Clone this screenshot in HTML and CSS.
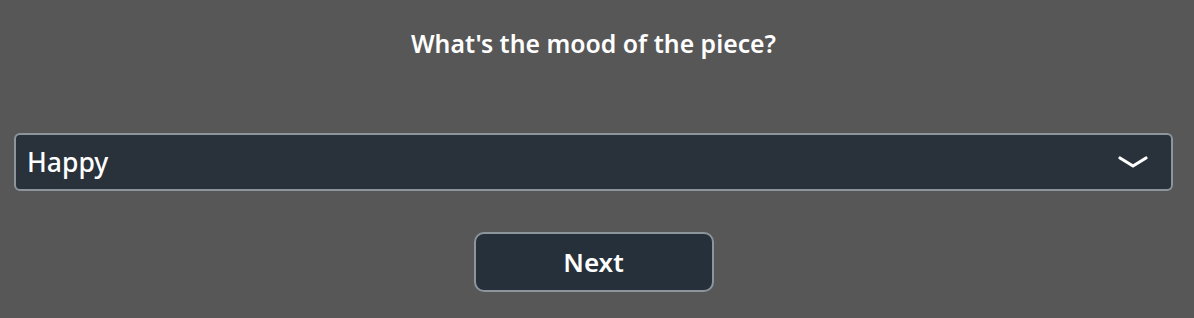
FILE: index.html
```html
<!DOCTYPE html>
<html>
<head>
<meta charset="utf-8">
<link rel="stylesheet" href="styles.css">
</head>
<body>
<div class="page">
  <h1 class="question">What's the mood of the piece?</h1>
  <div class="select">
    <span class="select-value">Happy</span>
    <svg class="chevron" width="30" height="14" viewBox="0 0 30 14"><path d="M2 3 L15 11 L28 3" fill="none" stroke="#ffffff" stroke-width="3.2" stroke-linecap="round" stroke-linejoin="round"/></svg>
  </div>
  <div class="actions">
    <button class="next">Next</button>
  </div>
</div>
</body>
</html>
```

FILE: styles.css
```css
html, body {
  margin: 0;
  padding: 0;
  background: #575757;
  font-family: "Noto Sans", "DejaVu Sans", sans-serif;
  color: #ffffff;
}
.page {
  width: 1194px;
  height: 318px;
  box-sizing: border-box;
  padding: 27px 21px 0 14px;
}
.question {
  margin: 0;
  text-align: center;
  font-size: 24.8px;
  font-weight: 600;
  line-height: 32px;
}
.select {
  margin-top: 74px;
  height: 58px;
  box-sizing: border-box;
  border: 2px solid #8c959b;
  border-radius: 6px;
  background: #29313a;
  display: flex;
  align-items: center;
  justify-content: space-between;
  padding: 0 23px 0 11px;
}
.select-value {
  font-size: 26.5px;
  font-weight: 500;
}
.chevron {
  display: block;
}
.actions {
  display: flex;
  justify-content: center;
  margin-top: 41px;
}
.next {
  width: 240px;
  height: 60px;
  box-sizing: border-box;
  border: 2px solid #8c959b;
  border-radius: 10px;
  background: #26303a;
  color: #ffffff;
  font-family: "Noto Sans", "DejaVu Sans", sans-serif;
  font-size: 26px;
  font-weight: 600;
  padding-top: 1px;
}
```
